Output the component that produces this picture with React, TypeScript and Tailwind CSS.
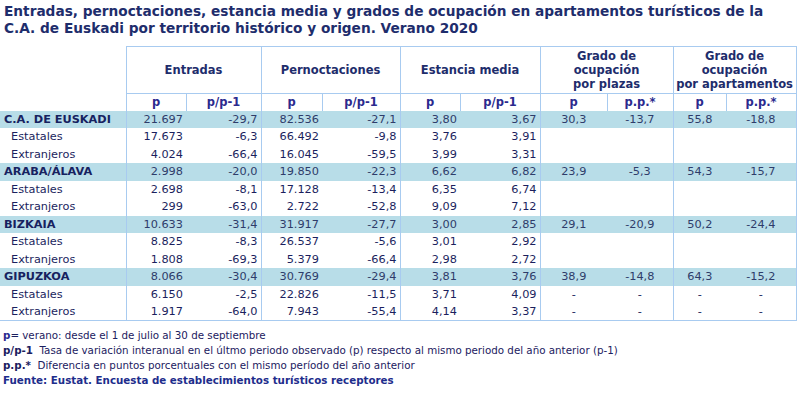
import React from 'react'

type Row = {
  label: string
  main?: boolean
  values: string[]
}

const rows: Row[] = [
  { label: 'C.A. DE EUSKADI', main: true, values: ['21.697', '-29,7', '82.536', '-27,1', '3,80', '3,67', '30,3', '-13,7', '55,8', '-18,8'] },
  { label: 'Estatales', values: ['17.673', '-6,3', '66.492', '-9,8', '3,76', '3,91', '', '', '', ''] },
  { label: 'Extranjeros', values: ['4.024', '-66,4', '16.045', '-59,5', '3,99', '3,31', '', '', '', ''] },
  { label: 'ARABA/ÁLAVA', main: true, values: ['2.998', '-20,0', '19.850', '-22,3', '6,62', '6,82', '23,9', '-5,3', '54,3', '-15,7'] },
  { label: 'Estatales', values: ['2.698', '-8,1', '17.128', '-13,4', '6,35', '6,74', '', '', '', ''] },
  { label: 'Extranjeros', values: ['299', '-63,0', '2.722', '-52,8', '9,09', '7,12', '', '', '', ''] },
  { label: 'BIZKAIA', main: true, values: ['10.633', '-31,4', '31.917', '-27,7', '3,00', '2,85', '29,1', '-20,9', '50,2', '-24,4'] },
  { label: 'Estatales', values: ['8.825', '-8,3', '26.537', '-5,6', '3,01', '2,92', '', '', '', ''] },
  { label: 'Extranjeros', values: ['1.808', '-69,3', '5.379', '-66,4', '2,98', '2,72', '', '', '', ''] },
  { label: 'GIPUZKOA', main: true, values: ['8.066', '-30,4', '30.769', '-29,4', '3,81', '3,76', '38,9', '-14,8', '64,3', '-15,2'] },
  { label: 'Estatales', values: ['6.150', '-2,5', '22.826', '-11,5', '3,71', '4,09', '-', '-', '-', '-'] },
  { label: 'Extranjeros', values: ['1.917', '-64,0', '7.943', '-55,4', '4,14', '3,37', '-', '-', '-', '-'] },
]

const colWidths = [126, 60, 75, 61, 78, 60, 80, 67, 66, 53, 70]
const subHeads = ['p', 'p/p-1', 'p', 'p/p-1', 'p', 'p/p-1', 'p', 'p.p.*', 'p', 'p.p.*']

const App: React.FC = () => {
  return (
    <div className="w-[800px] h-[403px] bg-white font-['DejaVu_Sans',Verdana,sans-serif] text-[#1b2060] overflow-hidden">
      {/* Title */}
      <h1 className="pt-[3px] pl-[4px] text-[13.7px] leading-[17px] font-bold text-[#1e2d6c] whitespace-nowrap">
        Entradas, pernoctaciones, estancia media y grados de ocupación en apartamentos turísticos de la
        <br />
        C.A. de Euskadi por territorio histórico y origen. Verano 2020
      </h1>

      {/* Table */}
      <table className="mt-[9px] w-[796px] table-fixed border-collapse">
        <colgroup>
          {colWidths.map((w, i) => (
            <col key={i} style={{ width: w }} />
          ))}
        </colgroup>
        <thead>
          <tr className="h-[47px] text-[11.5px] font-bold text-[#1e2d6c] leading-[14px]">
            <th rowSpan={2} className="border-r border-[#a8cbf0]"></th>
            <th colSpan={2} className="border border-[#a8cbf0] text-center">Entradas</th>
            <th colSpan={2} className="border border-[#a8cbf0] text-center">Pernoctaciones</th>
            <th colSpan={2} className="border border-[#a8cbf0] text-center">Estancia media</th>
            <th colSpan={2} className="border border-[#a8cbf0] text-center">
              Grado de
              <br />
              ocupación
              <br />
              por plazas
            </th>
            <th colSpan={2} className="border border-[#a8cbf0] text-center">
              Grado de
              <br />
              ocupación
              <br />
              por apartamentos
            </th>
          </tr>
          <tr className="h-[17px] text-[11.5px] font-bold text-[#2b2a8e] leading-none">
            {subHeads.map((s, i) => (
              <th key={i} className="border-x border-t border-[#a8cbf0] text-center">
                {s}
              </th>
            ))}
          </tr>
        </thead>
        <tbody className="text-[11.3px] leading-none">
          {rows.map((r, ri) => (
            <tr key={ri} className={`h-[17.5px] ${r.main ? 'bg-[#b8dde8] text-[#2e3c6a]' : 'text-[#1b1f5e]'} ${ri === rows.length - 1 ? 'border-b border-[#a8cbf0]' : ''}`}>
              <td
                className={`border-r border-[#a8cbf0] whitespace-nowrap ${
                  r.main ? 'pl-[4px] font-bold text-[#172260]' : 'pl-[11px]'
                }`}
              >
                {r.label}
              </td>
              {r.values.map((v, vi) => (
                <td
                  key={vi}
                  className={`${vi < 6 ? 'text-right pr-[3px]' : 'text-center'} ${
                    vi % 2 === 1 ? 'border-r border-[#a8cbf0]' : ''
                  }`}
                >
                  {v}
                </td>
              ))}
            </tr>
          ))}
        </tbody>
      </table>

      {/* Notes */}
      <div className="mt-[7px] pl-[3px] text-[10.3px] leading-[15px] text-[#1b2060] whitespace-nowrap">
        <p>
          <span className="font-bold text-[#2b2a8e]">p</span>= verano: desde el 1 de julio al 30 de septiembre
        </p>
        <p>
          <span className="font-bold">p/p-1</span>&nbsp; Tasa de variación interanual en el últmo periodo observado (p) respecto al mismo periodo del año anterior (p-1)
        </p>
        <p>
          <span className="font-bold">p.p.*</span>&nbsp; Diferencia en puntos porcentuales con el mismo período del año anterior
        </p>
        <p className="font-bold text-[#1e2d8c]">Fuente: Eustat. Encuesta de establecimientos turísticos receptores</p>
      </div>
    </div>
  )
}

export default App
